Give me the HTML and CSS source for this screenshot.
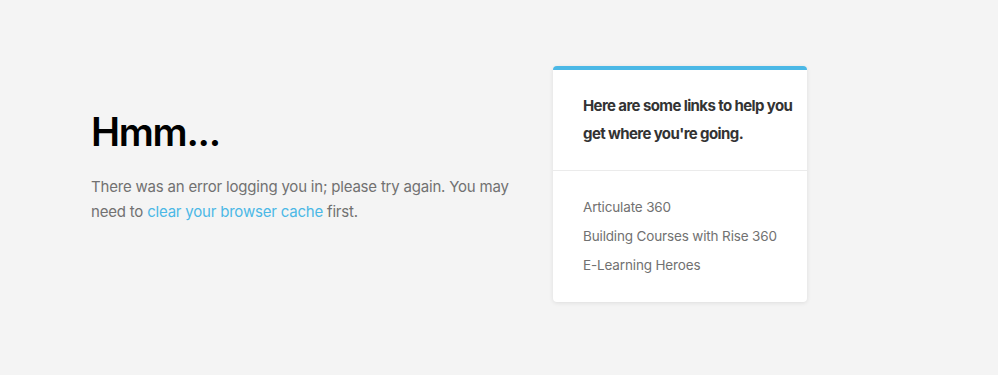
FILE: index.html
```html
<!DOCTYPE html>
<html lang="en">
<head>
  <meta charset="UTF-8">
  <meta name="viewport" content="width=device-width, initial-scale=1.0">
  <title>Error</title>
  <link rel="stylesheet" href="styles.css">
</head>
<body>
  <main class="page">
    <section class="message">
      <h1>Hmm...</h1>
      <p>There was an error logging you in; please try again. You may need to <a href="#">clear your browser cache</a> first.</p>
    </section>

    <aside class="card">
      <div class="card-header">Here are some links to help you get where you're going.</div>
      <ul class="card-links">
        <li><a href="#">Articulate 360</a></li>
        <li><a href="#">Building Courses with Rise 360</a></li>
        <li><a href="#">E-Learning Heroes</a></li>
      </ul>
    </aside>
  </main>
</body>
</html>
```

FILE: styles.css
```css
html, body {
  height: 100%;
}
body {
  margin: 0;
  background-color: #f4f4f4;
  font-family: 'Inter', 'Liberation Sans', sans-serif;
  color: #717171;
}
.page {
  height: 100%;
  display: flex;
  align-items: center;
  padding-left: 91px;
  box-sizing: border-box;
}
.message {
  width: 440px;
  margin-right: 22px;
  padding-bottom: 44px;
}
h1 {
  font-size: 39px;
  font-weight: 600;
  color: #000000;
  margin: 0 0 18px 0;
  line-height: 48px;
  letter-spacing: -1.3px;
}
.message p {
  margin: 0;
  font-size: 15px;
  line-height: 25px;
  letter-spacing: -0.2px;
}
.message a {
  color: #4bb8e6;
  text-decoration: none;
}
.card {
  width: 254px;
  margin-bottom: 7px;
  background: #ffffff;
  border-top: 4px solid #4bb8e6;
  border-radius: 4px;
  box-shadow: 0 1px 4px #00000018;
}
.card-header {
  padding: 22px 10px 22px 30px;
  font-size: 15px;
  font-weight: 700;
  line-height: 28px;
  color: #333333;
  letter-spacing: -0.6px;
  border-bottom: 1px solid #ebebeb;
}
.card-links {
  list-style: none;
  margin: 0;
  padding: 22px 10px 22px 30px;
}
.card-links li {
  font-size: 13.5px;
  line-height: 29px;
  letter-spacing: -0.15px;
}
.card-links a {
  color: #717171;
  text-decoration: none;
}
```
